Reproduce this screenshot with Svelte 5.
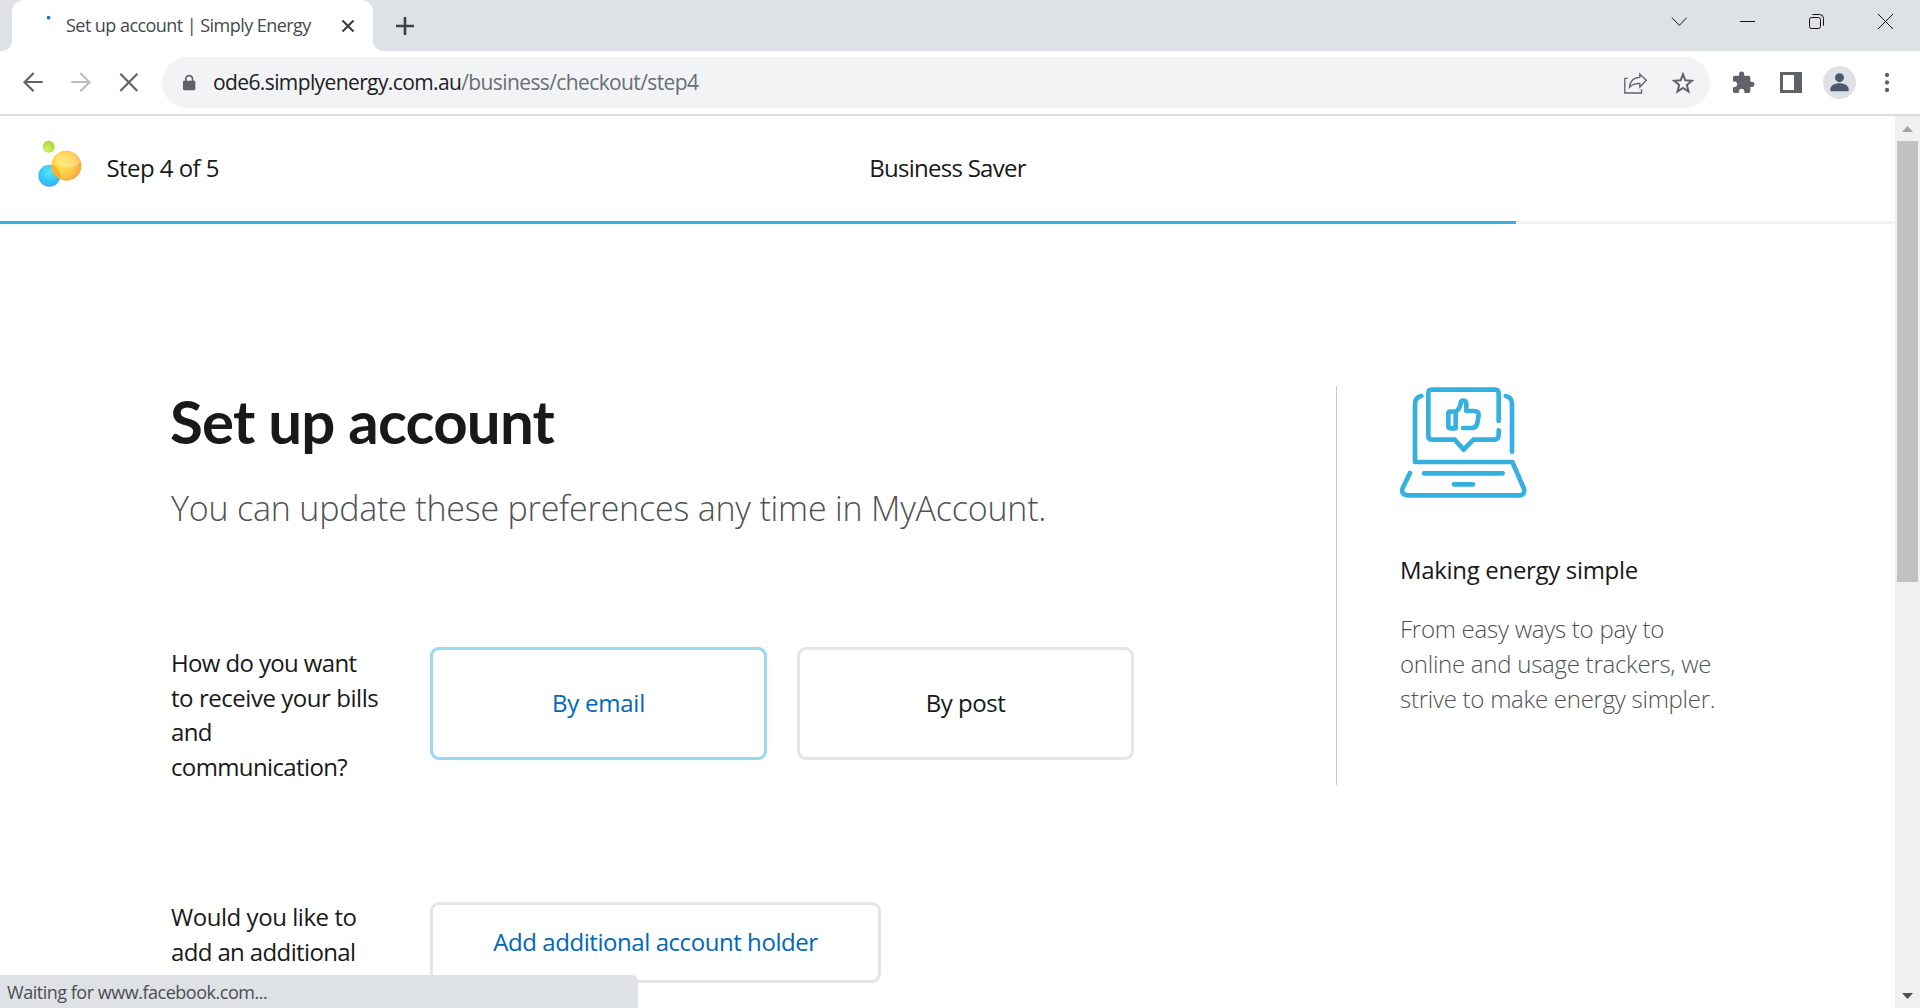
<script lang="ts">
  let delivery = $state('email');
  const progress = 80;
</script>

<div class="window">
  <div class="tabstrip">
    <div class="tab-prev"></div>
    <div class="tab">
      <svg class="spinner" width="20" height="20" viewBox="0 0 20 20"><circle cx="12.6" cy="6.7" r="1.9" fill="#1a73e8" /></svg>
      <span class="tab-title">Set up account | Simply Energy</span>
      <svg class="tab-close" width="14" height="14" viewBox="0 0 14 14"><path d="M1.500 1.500l11 11M12.500 1.500l-11 11" stroke="#3c4043" stroke-width="2.200" /></svg>
    </div>
    <div class="strip-rest">
      <svg width="18" height="18" viewBox="0 0 18 18"><path d="M9 0v18M0 9h18" stroke="#3c4043" stroke-width="2.600" /></svg>
    </div>
    <svg class="controls" width="360" height="51" viewBox="0 0 1080 153" fill="none" stroke="#111" stroke-width="3">
      <path d="M336 53l22 23 22-23" />
      <path d="M540 64.500h45" />
      <rect x="748.500" y="52.500" width="33" height="33" rx="6" />
      <path d="M757 43.500h22q11.500 0 11.500 11.500v22" />
      <path d="M954 42l45 45M999 42l-45 45" />
    </svg>
  </div>

  <div class="toolbar">
    <svg class="nav" width="162" height="63" viewBox="0 153 486 189" fill="none" stroke-width="6.500">
      <path d="M128 246H73M101 219L73.500 246.500 101 274" stroke="#5f6368" />
      <path d="M214 246h55M241 219l27.500 27.500L241 274" stroke="#babcbe" />
      <path d="M361 221l51 52M412 221l-51 52" stroke="#5f6368" />
    </svg>
    <div class="omnibox">
      <svg class="lock" width="14" height="18" viewBox="0 0 42 54"><rect x="3" y="20" width="37" height="29" rx="4" fill="#5f6368" /><path d="M11.500 22v-7a10 10 0 0 1 20 0v7" fill="none" stroke="#5f6368" stroke-width="5" /></svg>
      <span class="url">ode6.simplyenergy.com.au<span class="path">/business/checkout/step4</span></span>
    </div>
    <svg class="actions" width="360" height="63" viewBox="0 153 1080 189">
      <g fill="none" stroke="#5f6368" stroke-width="4">
        <path d="M203 235h-8.500v44h50v-11" />
        <path d="M208.500 262c1-18 13-30 31-30v-10l19.500 19-19.500 20v-11c-14 0-23 3-31 12z" />
      </g>
      <path d="M369 223l7 18 19.500 1.500-15 12.500 5 19.500-16.500-10.500-16.500 10.500 5-19.500-15-12.500 19.500-1.500z" fill="none" stroke="#5f6368" stroke-width="6" />
      <path transform="translate(512.500 211.500) scale(3.080)" fill="#5f6368" d="M20.500 11H19V7c0-1.100-.9-2-2-2h-4V3.500a2.500 2.500 0 0 0-5 0V5H4c-1.100 0-1.990.9-1.990 2v3.800H3.500c1.490 0 2.700 1.210 2.700 2.700s-1.210 2.700-2.700 2.700H2V20c0 1.100.9 2 2 2h3.800v-1.500c0-1.490 1.210-2.700 2.700-2.700 1.490 0 2.700 1.210 2.700 2.700V22H17c1.100 0 2-.9 2-2v-4h1.500a2.500 2.500 0 0 0 0-5z" />
      <path d="M660 216h66v63h-66zM669 225v45h33v-45z" fill="#5f6368" fill-rule="evenodd" />
      <circle cx="838.500" cy="247.500" r="49.500" fill="#dee1e6" />
      <circle cx="838.500" cy="233" r="13.500" fill="#4d5a6e" />
      <path d="M811 274v-7c0-10 13-17 27.500-17s27.500 7 27.500 17v7z" fill="#4d5a6e" />
      <g fill="#5f6368"><circle cx="981" cy="225" r="6.500" /><circle cx="981" cy="247.500" r="6.500" /><circle cx="981" cy="270" r="6.500" /></g>
    </svg>
  </div>

  <div class="viewport">
    <main>
      <header>
        <div class="brand">
          <svg width="46" height="50" viewBox="110 418 138 150">
            <defs>
              <radialGradient id="green" cx=".35" cy=".7" r=".8"><stop offset="0" stop-color="#d3f06a" /><stop offset="1" stop-color="#a4d02c" /></radialGradient>
              <radialGradient id="blue" cx=".5" cy=".35" r=".7"><stop offset="0" stop-color="#5ce4ff" /><stop offset=".6" stop-color="#33c8fc" /><stop offset="1" stop-color="#3aa5f5" /></radialGradient>
              <radialGradient id="gold" cx=".35" cy=".42" r=".68"><stop offset="0" stop-color="#ffe14a" /><stop offset=".55" stop-color="#fed045" /><stop offset="1" stop-color="#f7a043" /></radialGradient>
              <linearGradient id="shine" x1="0" y1="0" x2="0" y2="1"><stop offset="0" stop-color="#fff" stop-opacity=".15" /><stop offset="1" stop-color="#fff" stop-opacity=".3" /></linearGradient>
              <clipPath id="ball"><circle cx="198" cy="498" r="45" /></clipPath>
            </defs>
            <circle cx="145" cy="441" r="18" fill="url(#green)" />
            <circle cx="147" cy="528" r="33" fill="url(#blue)" />
            <circle cx="198" cy="498" r="45" fill="url(#gold)" />
            <g clip-path="url(#ball)"><circle cx="147" cy="528" r="33" fill="#f58a1f" opacity=".45" /><ellipse cx="202" cy="480" rx="38" ry="24" fill="url(#shine)" /></g>
          </svg>
          <span class="step">Step 4 of 5</span>
        </div>
        <span class="plan">Business Saver</span>
        <span></span>
      </header>
      <div class="progress"><div style="width: {progress}%"></div></div>

      <div class="content">
        <section class="form">
          <h1>Set up account</h1>
          <p class="lead">You can update these preferences any time in MyAccount.</p>

          <div class="row first">
            <div class="label"><span>How do you want</span><span class="loose">to receive your bills</span><span>and</span><span>communication?</span></div>
            <div class="choices">
              <button class:selected={delivery === 'email'} onclick={() => (delivery = 'email')}>By email</button>
              <button class:selected={delivery === 'post'} onclick={() => (delivery = 'post')}>By post</button>
            </div>
          </div>

          <div class="row second">
            <div class="label"><span class="loose">Would you like to</span><span>add an additional</span></div>
            <div class="choices"><button class="add">Add additional account holder</button></div>
          </div>
        </section>

        <aside>
          <svg width="130" height="114" viewBox="237 48 390 342" fill="none" stroke="#35b1e1" stroke-width="14" stroke-linecap="round" stroke-linejoin="round">
            <path d="M304 78q-19 4-19 24V276H577l34 78q7 22-15 22H263q-21-2-15-22l22-45" />
            <path d="M557 78q19 4 19 24V245" />
            <path d="M536 153V70q0-11-11-11H336q-11 0-11 11V197q0 12 12 12h67l27 30 29-30h62q14 0 14-14V181" />
            <path d="M312 310H548M402 343H459" />
            <path d="M385 131q0-6 6-6h16V175H391q-6 0-6-6z" />
            <path d="M409 124q13-13 13-26c0-9 17-9 17 3V123h24q14 0 13 12l-4 24q-3 15-17 15H429" />
          </svg>
          <h2>Making energy simple</h2>
          <p>From easy ways to pay to<br />online and usage trackers, we<br />strive to make energy simpler.</p>
        </aside>
      </div>
    </main>

    <div class="scrollbar">
      <svg width="25" height="25" viewBox="0 0 25 25"><path d="M7 16l5.500-6 5.500 6z" fill="#a3a3a3" /></svg>
      <div class="thumb"></div>
      <svg width="25" height="25" viewBox="0 0 25 25"><path d="M7 10l5.500 6 5.500-6z" fill="#505050" /></svg>
    </div>
    <div class="status">Waiting for www.facebook.com...</div>
  </div>
</div>

<style>
  :global(body) { margin: 0; background: #fff; overflow: hidden; }
  * { box-sizing: border-box; }
  .window { width: 1920px; height: 1008px; display: flex; flex-direction: column; overflow: hidden; font-family: 'Open Sans', 'Noto Sans', sans-serif; color: #191919; white-space: nowrap; }
  svg { display: block; flex: none; }

  .tabstrip { flex: none; height: 51px; display: flex; background: #fff; }
  .tab-prev { width: 12px; background: #dee1e6; border-bottom-right-radius: 10px; }
  .tab { width: 361px; display: flex; align-items: center; background: linear-gradient(#dee1e6, #dee1e6) top / 100% 12px no-repeat; position: relative; isolation: isolate; }
  .tab::before { content: ''; position: absolute; inset: 0; z-index: -1; background: #fff; border-radius: 12px 12px 0 0; }
  .spinner { margin: 11px 0 0 24px; align-self: flex-start; }
  .tab-title { margin: -1px 0 0 10px; width: 275px; font-size: 18px; letter-spacing: -0.550px; line-height: 24px; color: #45494d; }
  .strip-rest { flex: 1; display: flex; align-items: center; padding-left: 23px; background: #dee1e6; border-bottom-left-radius: 10px; }
  .controls { background: #dee1e6; }

  .toolbar { flex: none; height: 65px; display: flex; border-bottom: 2px solid #dadcdf; background: #fff; }
  .omnibox { margin: 6px 0; width: 1548px; height: 51px; display: flex; align-items: center; padding-left: 20px; border-radius: 26px; background: #f1f3f4; }
  .lock { margin-top: 1px; }
  .url { margin: -1px 0 0 17px; font-size: 21px; letter-spacing: -0.610px; line-height: 30px; color: #202124; }
  .path { color: #6b6f74; }
  .actions { margin-left: -150px; }

  .viewport { flex: 1; min-height: 0; display: flex; position: relative; }
  main { width: 1895px; height: 892px; overflow: hidden; }
  header { height: 105px; display: grid; grid-template-columns: 1fr auto 1fr; align-items: center; padding-bottom: 2px; font-size: 24px; line-height: 34px; }
  .brand { display: flex; align-items: center; padding-left: 37px; }
  .step { margin-left: 23.500px; letter-spacing: -0.550px; }
  .plan { letter-spacing: -0.720px; }
  .brand svg { margin-bottom: 7px; }
  .progress { height: 3px; background: #f2f2f2; }
  .progress div { height: 3px; background: #35b1e1; }

  .content { display: flex; align-items: flex-start; padding: 162px 0 0 170px; }
  .form { width: 1166px; }
  h1 { margin: -1px 0 0; font-family: Lato, 'Open Sans', sans-serif; font-size: 60px; font-weight: 700; letter-spacing: -0.800px; line-height: 72px; }
  .lead { margin: 30px 0 0 1px; font-size: 34px; font-weight: 300; letter-spacing: -0.200px; line-height: 42px; color: #505153; }
  .row { display: flex; align-items: flex-start; }
  .row.first { margin-top: 116px; height: 140px; }
  .row.second { margin-top: 114px; }
  .label { width: 260px; padding: 1px 0 0 1px; font-size: 24px; letter-spacing: -0.630px; line-height: 34.700px; }
  .label span { display: block; }
  .label .loose { letter-spacing: -0.450px; }
  .choices { display: flex; gap: 30px; padding-top: 2px; }
  .second .choices { padding-top: 3px; }
  button { width: 337px; height: 113px; padding: 0 0 1px; border: 3px solid #e5e5e5; border-radius: 9px; background: #fff; font: 400 24px/34px 'Open Sans', 'Noto Sans', sans-serif; letter-spacing: -0.500px; color: #191919; }
  button.selected { border-color: #98d8f1; letter-spacing: -0.250px; color: #0067b9; }
  button.add { width: 451px; height: 81px; letter-spacing: -0.440px; color: #0067b9; padding-bottom: 2px; }

  aside { width: 420px; height: 399px; padding-left: 63px; border-left: 1px solid #c8c8c8; }
  aside svg { margin-left: -1px; }
  h2 { margin: 52px 0 0; font-size: 24px; font-weight: 400; letter-spacing: -0.320px; line-height: 35px; }
  aside p { margin: 24px 0 0; font-size: 24px; font-weight: 300; letter-spacing: -0.260px; line-height: 35px; color: #505153; }

  .scrollbar { width: 25px; background: #f0f0f0; display: flex; flex-direction: column; align-items: center; }
  .thumb { width: 21px; height: 441px; margin-bottom: auto; background: #c1c1c1; }
  .status { position: absolute; left: 0; bottom: 0; width: 638px; height: 33px; padding: 4px 7px 0; border-top-right-radius: 6px; background: #dee1e6; font-size: 18px; letter-spacing: -0.480px; line-height: 27px; color: #4b4e52; }
</style>
